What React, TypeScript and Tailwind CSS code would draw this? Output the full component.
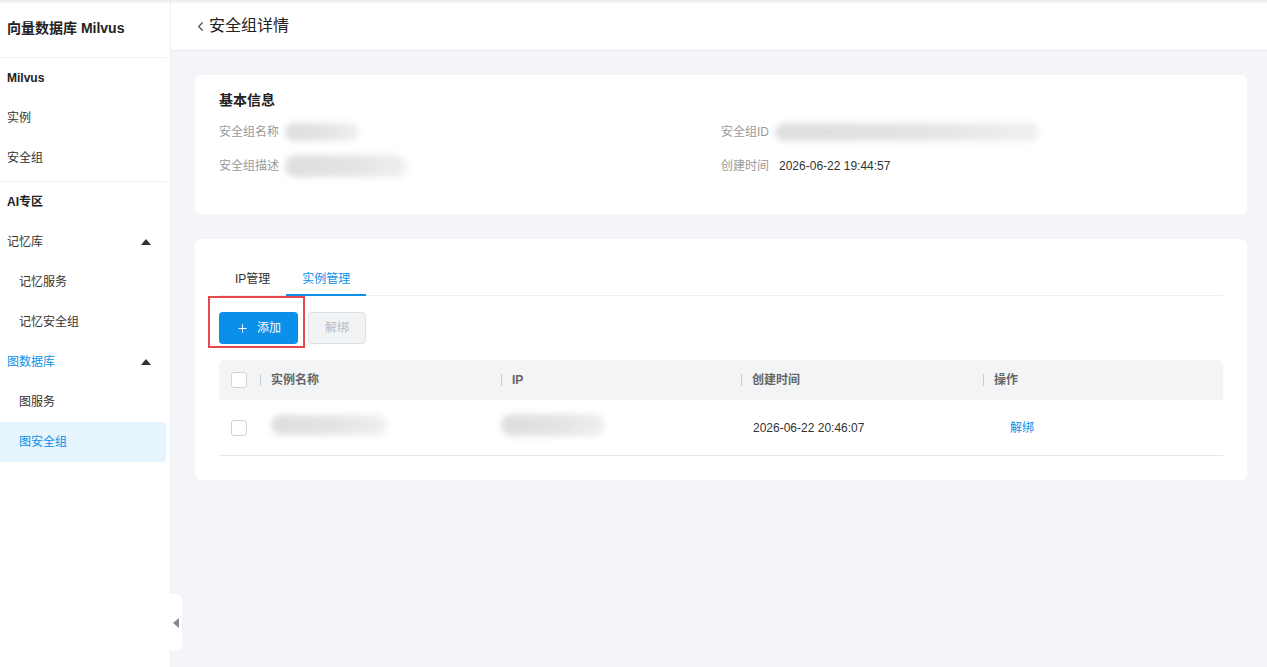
import React from 'react';
import { ChevronLeft, Plus } from 'lucide-react';

const font = { fontFamily: '"Liberation Sans", "Noto Sans CJK SC", sans-serif' };

type NavItem = { label: string; kind: 'group' | 'item' | 'parent' | 'sub'; active?: boolean; open?: boolean };

const Caret: React.FC = () => (
  <svg width="10" height="6" viewBox="0 0 10 6" className="fill-[#333]">
    <path d="M5 0 L10 6 L0 6 Z" />
  </svg>
);

// masked value – rendered as a soft grey smudge
const Blur: React.FC<{ w: number; className?: string }> = ({ w, className = '' }) => (
  <span
    className={`inline-block h-[18px] rounded-full bg-gradient-to-r from-[#d6d6d6] via-[#dcdcdc] to-[#ececec] blur-[3px] opacity-80 ${className}`}
    style={{ width: w }}
  />
);

const Sidebar: React.FC = () => {
  const sections: NavItem[][] = [
    [
      { label: 'Milvus', kind: 'group' },
      { label: '实例', kind: 'item' },
      { label: '安全组', kind: 'item' },
    ],
    [
      { label: 'AI专区', kind: 'group' },
      { label: '记忆库', kind: 'parent', open: true },
      { label: '记忆服务', kind: 'sub' },
      { label: '记忆安全组', kind: 'sub' },
      { label: '图数据库', kind: 'parent', open: true, active: true },
      { label: '图服务', kind: 'sub' },
      { label: '图安全组', kind: 'sub', active: true },
    ],
  ];

  return (
    <aside className="w-[171px] shrink-0 bg-white border-r border-[#ebedf0] pr-[4px] relative">
      <div className="h-[58px] flex items-center px-[7px] text-[14px] font-bold text-[#222] border-b border-[#eef0f3]">
        向量数据库 Milvus
      </div>
      {sections.map((items, si) => (
        <div key={si} className={si === 0 ? 'border-b border-[#eef0f3] pb-[3px]' : ''}>
          {items.map((it) => {
            if (it.kind === 'group') {
              return (
                <div key={it.label} className="h-[40px] flex items-center px-[7px] text-[12px] font-bold text-[#222]">
                  {it.label}
                </div>
              );
            }
            if (it.kind === 'parent') {
              return (
                <div
                  key={it.label}
                  className={`h-[40px] flex items-center justify-between pl-[7px] pr-[15px] text-[12px] ${it.active ? 'text-[#0b8fe9]' : 'text-[#333]'}`}
                >
                  <span>{it.label}</span>
                  <Caret />
                </div>
              );
            }
            return (
              <div
                key={it.label}
                className={`h-[40px] flex items-center text-[12px] rounded-r-[4px] ${it.kind === 'sub' ? 'pl-[19px]' : 'pl-[7px]'} ${it.active ? 'bg-[#e6f4fd] text-[#0b8fe9]' : 'text-[#333]'}`}
              >
                {it.label}
              </div>
            );
          })}
        </div>
      ))}
      <div className="absolute -right-[12px] top-[594px] w-[12px] h-[57px] bg-white rounded-r-[6px] flex items-center justify-center">
        <svg width="6" height="10" viewBox="0 0 6 10" className="fill-[#888]">
          <path d="M6 0 L6 10 L0 5 Z" />
        </svg>
      </div>
    </aside>
  );
};

const Field: React.FC<{ label: string; children: React.ReactNode }> = ({ label, children }) => (
  <div className="flex items-center h-[34px] text-[12px]">
    <span className="text-[#999] mr-[6px]">{label}</span>
    {children}
  </div>
);

const InfoCard: React.FC = () => (
  <div className="bg-white rounded-[6px] h-[139px] px-[24px] pt-[15px]">
    <div className="text-[14px] font-bold text-[#222] mb-[4px]">基本信息</div>
    <div className="grid grid-cols-2">
      <div>
        <Field label="安全组名称">
          <Blur w={74} />
        </Field>
        <Field label="安全组描述">
          <Blur w={122} className="h-[22px]" />
        </Field>
      </div>
      <div>
        <Field label="安全组ID">
          <Blur w={264} />
        </Field>
        <Field label="创建时间">
          <span className="text-[#333] ml-[4px]">2026-06-22 19:44:57</span>
        </Field>
      </div>
    </div>
  </div>
);

const Check: React.FC = () => (
  <span className="inline-block w-[16px] h-[16px] rounded-[3px] border border-[#d0d3d9] bg-white" />
);

const Sep: React.FC = () => <span className="w-px h-[12px] bg-[#c8ccd2] mr-[10px]" />;

const InstanceCard: React.FC = () => (
  <div className="bg-white rounded-[6px] h-[241px] px-[24px] pt-[27px]">
    <div className="flex border-b border-[#eceef1] h-[30px] text-[12px]">
      <div className="px-[16px] text-[#333] flex items-start pt-[4px]">IP管理</div>
      <div className="px-[16px] text-[#0b8fe9] border-b-2 border-[#0b8fe9] flex items-start pt-[4px] -mb-px">实例管理</div>
    </div>

    <div className="flex items-center gap-[10px] mt-[16px] relative">
      <button className="h-[32px] w-[79px] rounded-[4px] bg-[#0b90e9] text-white text-[12px] flex items-center justify-center gap-[8px]">
        <Plus className="w-[13px] h-[13px]" strokeWidth={1.75} />
        添加
      </button>
      <button className="h-[32px] w-[58px] rounded-[4px] bg-[#f2f3f5] border border-[#dcdfe3] text-[#b8bcc2] text-[12px]">
        解绑
      </button>
      {/* highlight frame around the add button */}
      <div className="absolute -left-[11px] -top-[16px] w-[97px] h-[52px] border-2 border-[#e5484d] pointer-events-none" />
    </div>

    <div className="mt-[16px]">
      <div className="h-[40px] bg-[#f3f4f6] rounded-t-[6px] flex items-center text-[12px] font-bold text-[#666]">
        <div className="w-[41px] shrink-0 pl-[12px] flex items-center">
          <Check />
        </div>
        <div className="w-[241px] shrink-0 flex items-center"><Sep />实例名称</div>
        <div className="w-[240px] shrink-0 flex items-center"><Sep />IP</div>
        <div className="w-[242px] shrink-0 flex items-center"><Sep />创建时间</div>
        <div className="flex-1 flex items-center"><Sep />操作</div>
      </div>
      <div className="h-[56px] flex items-center text-[12px] border-b border-[#e6e8eb]">
        <div className="w-[41px] shrink-0 pl-[12px] flex items-center">
          <Check />
        </div>
        <div className="w-[241px] shrink-0 pl-[11px]">
          <Blur w={116} className="h-[20px]" />
        </div>
        <div className="w-[240px] shrink-0">
          <Blur w={104} className="h-[22px]" />
        </div>
        <div className="w-[242px] shrink-0 pl-[12px] text-[#333]">2026-06-22 20:46:07</div>
        <div className="flex-1 pl-[27px] text-[#0b8fe9]">解绑</div>
      </div>
    </div>
  </div>
);

const App: React.FC = () => {
  return (
    <div className="h-[667px] w-full flex bg-[#f4f5f9] relative overflow-hidden" style={font}>
      <div className="absolute inset-x-0 top-0 h-[4px] bg-gradient-to-b from-[#e9eaed] to-transparent z-10" />
      <Sidebar />
      <main className="flex-1 min-w-0 flex flex-col">
        <header className="h-[51px] bg-white border-b border-[#e8eaee] flex items-center pl-[22px] pt-[2px] text-[16px] text-[#222]">
          <ChevronLeft className="w-[15px] h-[15px] text-[#555] mr-[1px]" strokeWidth={2} />
          安全组详情
        </header>
        <div className="pl-[24px] pr-[20px] pt-[24px] flex flex-col gap-[25px]">
          <InfoCard />
          <InstanceCard />
        </div>
      </main>
    </div>
  );
};

export default App;
